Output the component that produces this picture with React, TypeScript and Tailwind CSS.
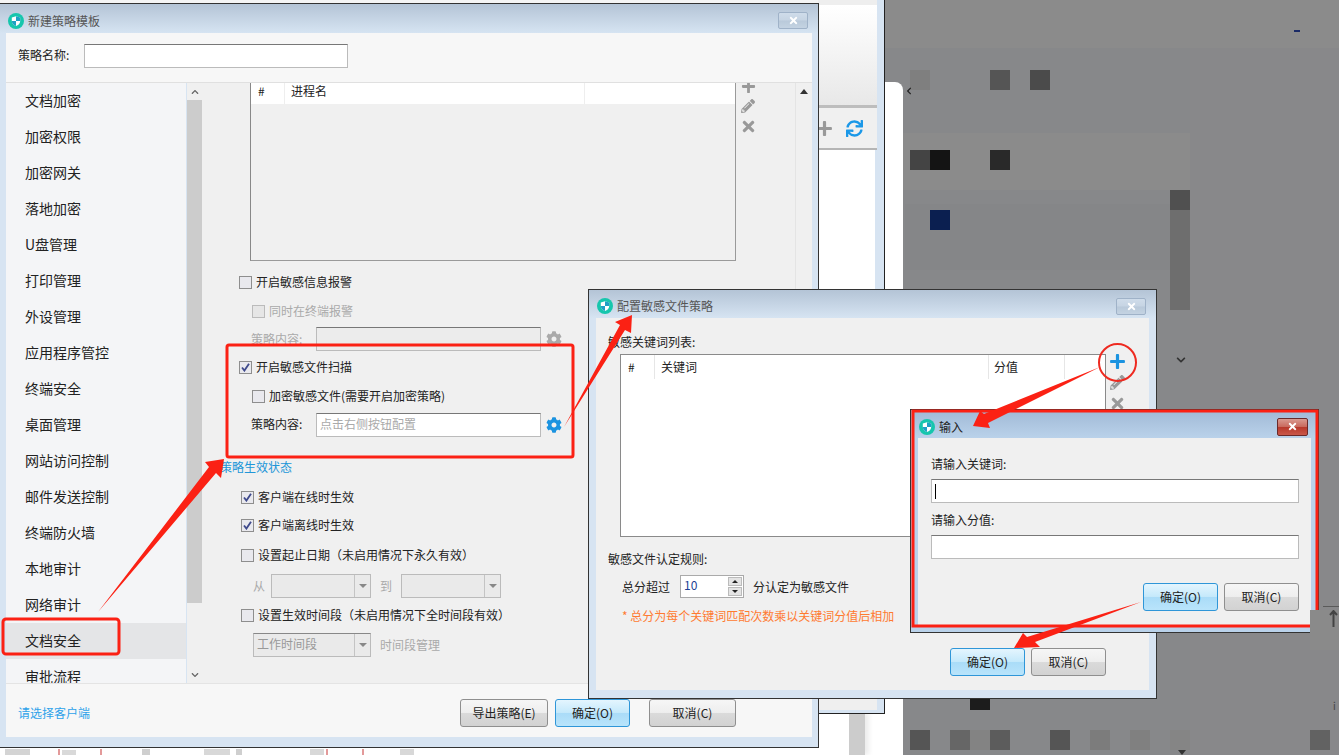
import type { ReactNode } from "react";
import { FaCog, FaPencilAlt, FaPlus, FaSync, FaTimes, FaChevronDown, FaChevronUp, FaChevronLeft } from "react-icons/fa";

const MENU = [
  "文档加密", "加密权限", "加密网关", "落地加密", "U盘管理", "打印管理", "外设管理", "应用程序管控", "终端安全",
  "桌面管理", "网站访问控制", "邮件发送控制", "终端防火墙", "本地审计", "网络审计", "文档安全", "审批流程",
];

// blurred-out content of the page behind the dialogs
const MOSAIC = [
  { x: 884, y: 48, w: 455, h: 707, c: "#87888a" },
  { x: 903, y: 133, w: 287, h: 57, c: "#8b8b8b" },
  { x: 905, y: 204, w: 265, h: 66, c: "#858688" },
  { x: 1190, y: 48, w: 149, h: 707, c: "#88888a" },
  { x: 1170, y: 190, w: 20, h: 20, c: "#505050" },
  { x: 1170, y: 210, w: 20, h: 100, c: "#6e6e6e" },
  { x: 910, y: 70, w: 20, h: 20, c: "#7f7f7f" },
  { x: 990, y: 70, w: 20, h: 20, c: "#555555" },
  { x: 1030, y: 70, w: 20, h: 20, c: "#4b4b4b" },
  { x: 910, y: 150, w: 20, h: 20, c: "#444444" },
  { x: 930, y: 150, w: 20, h: 20, c: "#141414" },
  { x: 990, y: 150, w: 20, h: 20, c: "#292929" },
  { x: 930, y: 210, w: 20, h: 20, c: "#0b1f50" },
  { x: 970, y: 690, w: 20, h: 20, c: "#1c1c1c" },
  { x: 910, y: 730, w: 20, h: 20, c: "#555555" },
  { x: 950, y: 730, w: 20, h: 20, c: "#666666" },
  { x: 970, y: 730, w: 20, h: 20, c: "#838383" },
  { x: 990, y: 730, w: 20, h: 20, c: "#5c5c5c" },
  { x: 1050, y: 730, w: 20, h: 20, c: "#555555" },
  { x: 1090, y: 730, w: 20, h: 20, c: "#7c7c7c" },
  { x: 1130, y: 730, w: 20, h: 20, c: "#808080" },
  { x: 1170, y: 730, w: 20, h: 20, c: "#858585" },
  { x: 1310, y: 730, w: 20, h: 20, c: "#626262" },
  { x: 1294, y: 30, w: 6, h: 2, c: "#1a2a66" },
  // strip of thumbnails under the main dialog
  { x: 0, y: 748, w: 903, h: 7, c: "#ffffff" },
  { x: 5, y: 749, w: 25, h: 6, c: "#d4d4d4" },
  { x: 58, y: 749, w: 2, h: 6, c: "#e39a9a" },
  { x: 62, y: 750, w: 14, h: 5, c: "#d9d9d9" },
  { x: 100, y: 749, w: 2, h: 6, c: "#e39a9a" },
  { x: 142, y: 749, w: 8, h: 6, c: "#cfcfcf" },
  { x: 204, y: 749, w: 26, h: 6, c: "#d8d8d8" },
  { x: 236, y: 749, w: 6, h: 6, c: "#cfcfcf" },
  { x: 310, y: 749, w: 14, h: 6, c: "#d8d8d8" },
  { x: 326, y: 749, w: 2, h: 6, c: "#e39a9a" },
  { x: 362, y: 749, w: 2, h: 6, c: "#e39a9a" },
  { x: 400, y: 749, w: 14, h: 6, c: "#d8d8d8" },
];

function Logo() {
  return (
    <svg width="16" height="16" viewBox="0 0 16 16" className="shrink-0">
      <circle cx="8" cy="8" r="8" fill="#16c6ad" />
      <path d="M8 3.2 L12.2 4.6 V8 C12.2 10.6 10.2 12.2 8 13 C5.8 12.2 3.8 10.6 3.8 8 V4.6 Z" fill="#ffffff" />
      <path d="M8 3.2 L12.2 4.6 V8 H8 Z M8 8 V13 C5.8 12.2 3.8 10.6 3.8 8 Z" fill="#1f9fc4" />
    </svg>
  );
}

function CloseBtn({ active }: { active?: boolean }) {
  return (
    <div
      className={
        active
          ? "flex h-[18px] w-[31px] items-center justify-center rounded-[2px] border border-[#6b2a2a] bg-[linear-gradient(#d99a90_0%,#c96a5e_48%,#b8392c_52%,#c9584a_100%)] text-white"
          : "flex h-[17px] w-[30px] items-center justify-center rounded-[2px] border border-[#9fb2c8] bg-[linear-gradient(#cfdcea_0%,#c6d4e3_48%,#b9c9da_52%,#c4d3e2_100%)] text-white"
      }
    >
      <FaTimes size={11} />
    </div>
  );
}

function TitleBar({ title, active, dark, short }: { title: string; active?: boolean; dark?: boolean; short?: boolean }) {
  return (
    <div
      className={`flex ${short ? "h-[28px]" : "h-[29px]"} shrink-0 items-center justify-between pl-[8px] pr-[10px] ${
        dark
          ? "bg-[linear-gradient(#a0b9d6,#bad2ea)] pt-[5px] text-[#222]"
          : "bg-[linear-gradient(#b4c4d6,#d6e4f2)] pt-[4px] text-[#555]"
      }`}
    >
      <div className="flex items-center gap-[4px] text-[12px] leading-[16px]">
        <Logo />
        <span>{title}</span>
      </div>
      <CloseBtn active={active} />
    </div>
  );
}

function Btn({ children, primary, w = "w-[75px]" }: { children: ReactNode; primary?: boolean; w?: string }) {
  return (
    <div
      className={`flex h-[28px] ${w} items-center justify-center rounded-[3px] border text-[12px] leading-[16px] text-[#222] ${
        primary
          ? "border-[#2f96d8] bg-[linear-gradient(#e4f5fe_0%,#c5e9fb_48%,#aadcf8_52%,#b9e4fb_100%)]"
          : "border-[#8f8f8f] bg-[linear-gradient(#f6f6f6_0%,#eeeeee_48%,#dadada_52%,#d2d2d2_100%)]"
      }`}
    >
      {children}
    </div>
  );
}

function Check({ checked, disabled }: { checked?: boolean; disabled?: boolean }) {
  return (
    <div
      className={`flex h-[13px] w-[13px] shrink-0 items-center justify-center border ${
        disabled ? "border-[#bbbbbb] bg-[#e6e6e6]" : "border-[#8e8e8e] bg-[#e9e9ee]"
      }`}
    >
      {checked && (
        <svg width="9" height="9" viewBox="0 0 9 9">
          <path d="M1 4.5 L3.4 7.6 L8 0.8" fill="none" stroke="#3f4a8c" strokeWidth="1.8" />
        </svg>
      )}
    </div>
  );
}

function CheckRow({ label, className, checked, disabled }: { label: string; className: string; checked?: boolean; disabled?: boolean }) {
  return (
    <div className={`flex h-[24px] items-center gap-[4px] text-[12px] ${disabled ? "text-[#aaaaaa]" : "text-[#222]"} ${className}`}>
      <Check checked={checked} disabled={disabled} />
      <span>{label}</span>
    </div>
  );
}

function Combo({ w, text, plain }: { w: string; text?: string; plain?: boolean }) {
  return (
    <div className={`flex h-[24px] ${w} border ${plain ? "border-[#bbbbbb]" : "border-[#bbbbbb] border-t-[#888888]"} bg-[#eaeaea]`}>
      <div className="flex-1 pl-[3px] text-[12px] leading-[20px] text-[#999999]">{text}</div>
      <div className="flex w-[16px] items-center justify-center border-l border-[#c4c4c4]">
        <div className="h-0 w-0 border-x-[4px] border-t-[4px] border-x-transparent border-t-[#888888]" />
      </div>
    </div>
  );
}

function TextBox({ w, className = "", children, disabled }: { w: string; className?: string; children?: ReactNode; disabled?: boolean }) {
  return (
    <div
      className={`h-[24px] ${w} shrink-0 border border-[#bbbbbb] border-t-[#777777] ${
        disabled ? "bg-[#ececec]" : "bg-white"
      } ${className}`}
    >
      {children}
    </div>
  );
}

function MainDialog() {
  return (
    <div className="absolute left-[-1px] top-[3px] flex h-[745px] w-[820px] flex-col border border-[#333333] bg-[#d7e4f2]">
      <TitleBar title="新建策略模板" />
      <div className="mx-[6px] flex h-[704px] flex-col">
        <div className="flex h-[50px] shrink-0 gap-[12px] border-b border-[#e0e0e0] bg-[#f7f7f7] pl-[12px] pt-[11px] text-[12px] leading-[22px] text-[#222]">
          <span className="w-[54px]">策略名称:</span>
          <TextBox w="w-[264px]" />
        </div>

        <div className="flex h-[600px] shrink-0">
          <div className="h-full w-[180px] shrink-0 overflow-hidden bg-[#f4f5f7]">
            {MENU.map((m) => (
              <div
                key={m}
                className={`h-[36px] pl-[19px] text-[14px] leading-[34px] text-[#222] ${m === "文档安全" ? "bg-[#e4e5e7]" : ""}`}
              >
                {m}
              </div>
            ))}
          </div>
          <div className="ml-[1px] flex h-full w-[15px] shrink-0 flex-col bg-[#f0f0f0] text-[#666666]">
            <div className="flex h-[17px] items-center justify-center">
              <FaChevronUp size={8} />
            </div>
            <div className="h-[503px] bg-[#cccccc]" />
            <div className="flex flex-1 items-end justify-center pb-[4px]">
              <FaChevronDown size={8} />
            </div>
          </div>

          <div className="flex min-w-0 flex-1 overflow-hidden bg-[#f0f0f0]">
            <div className="min-w-0 flex-1 pl-[37px]">
              <div className="ml-[11px] flex">
                <div className="h-[178px] w-[486px] shrink-0 border border-t-0 border-[#9a9a9a] border-l-[#888888]">
                  <div className="flex h-[21px] bg-white text-[12px] leading-[16px] text-[#222]">
                    <div className="w-[34px] border-r border-[#eeeeee] pl-[7px]">#</div>
                    <div className="w-[300px] border-r border-[#eeeeee] pl-[6px]">进程名</div>
                  </div>
                </div>
                <div className="ml-[4px] mt-[-4px] flex w-[16px] flex-col items-center gap-[5px] text-[#999999]">
                  <FaPlus size={15} />
                  <FaPencilAlt size={14} />
                  <FaTimes size={17} />
                </div>
              </div>

              <CheckRow className="mt-[9px]" label="开启敏感信息报警" />
              <CheckRow className="ml-[13px] mt-[5px]" label="同时在终端报警" disabled />
              <div className="ml-[12px] mt-[4px] flex h-[24px] items-center text-[12px] text-[#aaaaaa]">
                <span className="w-[65px] shrink-0">策略内容:</span>
                <TextBox w="w-[225px]" disabled />
                <FaCog size={16} className="ml-[5px] text-[#aaaaaa]" />
              </div>
              <CheckRow className="mt-[4px]" label="开启敏感文件扫描" checked />
              <CheckRow className="ml-[13px] mt-[5px]" label="加密敏感文件(需要开启加密策略)" />
              <div className="ml-[12px] mt-[5px] flex h-[24px] items-center text-[12px] text-[#222]">
                <span className="mt-[-2px] w-[65px] shrink-0">策略内容:</span>
                <TextBox w="w-[225px]" className="pl-[3px] leading-[20px] text-[#aaaaaa]">
                  点击右侧按钮配置
                </TextBox>
                <FaCog size={16} className="ml-[5px] text-[#1b93e0]" />
              </div>
              <div className="ml-[-19px] mt-[18px] h-[24px] text-[12px] leading-[24px] text-[#2196d8]">策略生效状态</div>
              <CheckRow className="ml-[2px] mt-[6px]" label="客户端在线时生效" checked />
              <CheckRow className="ml-[2px] mt-[4px]" label="客户端离线时生效" checked />
              <CheckRow className="ml-[2px] mt-[6px]" label="设置起止日期（未启用情况下永久有效）" />
              <div className="ml-[14px] mt-[7px] flex items-center text-[12px] text-[#aaaaaa]">
                <span className="w-[18px]">从</span>
                <Combo w="w-[100px]" plain />
                <span className="w-[30px] pl-[9px]">到</span>
                <Combo w="w-[100px]" plain />
              </div>
              <CheckRow className="ml-[2px] mt-[5px]" label="设置生效时间段（未启用情况下全时间段有效）" />
              <div className="ml-[14px] mt-[6px] flex items-center gap-[9px] text-[12px] text-[#aaaaaa]">
                <Combo w="w-[118px]" text="工作时间段" />
                <span>时间段管理</span>
              </div>
            </div>
            <div className="w-[17px] shrink-0 border-l border-[#e4e4e4] pt-[6px]">
              <div className="mx-auto h-0 w-0 border-x-[4px] border-b-[5px] border-x-transparent border-b-[#333333]" />
            </div>
          </div>
        </div>

        <div className="flex h-[54px] shrink-0 items-center justify-between border-t border-[#e4e4e4] bg-[#f7f7f7] pl-[12px] pr-[76px] pt-[5px]">
          <span className="text-[12px] text-[#2ea2ea]">请选择客户端</span>
          <div className="flex gap-[7px]">
            <Btn w="w-[88px]">导出策略(E)</Btn>
            <Btn primary w="w-[75px]">确定(O)</Btn>
            <div className="ml-[12px]">
              <Btn w="w-[87px]">取消(C)</Btn>
            </div>
          </div>
        </div>
      </div>
    </div>
  );
}

function RulesDialog() {
  return (
    <div className="absolute left-[588px] top-[289px] flex h-[410px] w-[569px] flex-col border border-[#333333] bg-[#d7e4f2]">
      <TitleBar title="配置敏感文件策略" short />
      <div className="mx-[7px] h-[372px] bg-[#f0f0f0] pl-[12px] pt-[14px] text-[12px] text-[#222]">
        <div className="h-[20px] leading-[20px]">敏感关键词列表:</div>
        <div className="ml-[12px] mt-[2px] flex">
          <div className="h-[183px] w-[486px] shrink-0 border border-[#8a8a8a] bg-white">
            <div className="flex h-[24px] leading-[24px]">
              <div className="w-[34px] border-r border-[#e6e6e6] pl-[7px]">#</div>
              <div className="w-[334px] border-r border-[#e6e6e6] pl-[6px]">关键词</div>
              <div className="w-[76px] border-r border-[#e6e6e6] pl-[5px]">分值</div>
            </div>
          </div>
          <div className="ml-[3px] mt-[-1px] flex flex-col items-center gap-[5px]">
            <FaPlus size={17} className="text-[#1b93e0]" />
            <FaPencilAlt size={15} className="text-[#999999]" />
            <FaTimes size={17} className="text-[#999999]" />
          </div>
        </div>
        <div className="mt-[12px] h-[20px] leading-[20px]">敏感文件认定规则:</div>
        <div className="ml-[14px] mt-[6px] flex h-[23px] items-center">
          <span className="w-[58px]">总分超过</span>
          <div className="flex h-[23px] w-[64px] border border-[#aaaaaa] bg-white">
            <div className="flex-1 pl-[3px] leading-[18px] text-[#1c3f94]">10</div>
            <div className="flex w-[15px] flex-col gap-[1px] py-[1px] pr-[1px]">
              <div className="flex flex-1 items-center justify-center border border-[#bbbbbb] bg-[#e4e4e4]">
                <div className="h-0 w-0 border-x-[3px] border-b-[3px] border-x-transparent border-b-[#222222]" />
              </div>
              <div className="flex flex-1 items-center justify-center border border-[#bbbbbb] bg-[#e4e4e4]">
                <div className="h-0 w-0 border-x-[3px] border-t-[3px] border-x-transparent border-t-[#222222]" />
              </div>
            </div>
          </div>
          <span className="ml-[9px]">分认定为敏感文件</span>
        </div>
        <div className="ml-[14px] mt-[9px] h-[18px] leading-[18px] text-[#ff7a30]">* 总分为每个关键词匹配次数乘以关键词分值后相加</div>
        <div className="mt-[23px] flex justify-end gap-[6px] pr-[43px]">
          <Btn primary>确定(O)</Btn>
          <Btn>取消(C)</Btn>
        </div>
      </div>
    </div>
  );
}

function InputDialog() {
  return (
    <div className="absolute left-[910px] top-[409px] flex h-[224px] w-[409px] flex-col border border-[#333333] bg-[#bad2ea]">
      <TitleBar title="输入" active dark short />
      <div className="mx-[7px] h-[187px] bg-[#f0f0f0] pl-[13px] pr-[12px] pt-[16px] text-[12px] text-[#222]">
        <div className="h-[20px] leading-[20px]">请输入关键词:</div>
        <TextBox w="w-full" className="mt-[5px] pl-[3px] pt-[4px]">
          <div className="h-[15px] w-[1px] bg-black" />
        </TextBox>
        <div className="mt-[7px] h-[20px] leading-[20px]">请输入分值:</div>
        <TextBox w="w-full" className="mt-[5px]" />
        <div className="mt-[24px] flex justify-end gap-[6px]">
          <Btn primary>确定(O)</Btn>
          <Btn>取消(C)</Btn>
        </div>
      </div>
    </div>
  );
}

function BehindWindow() {
  return (
    <>
      {/* white page behind everything, right of the main dialog */}
      <div className="absolute bottom-0 left-[818px] top-[82px] flex w-[85px] flex-col justify-end rounded-tr-[8px] bg-white pl-[31px]">
        <div className="h-[42px] w-[16px] bg-[#cccccc] shadow-[4px_0_5px_rgba(0,0,0,0.08)]" />
      </div>
      <div className="absolute left-0 top-0 flex h-[714px] w-[885px] flex-col border-b border-r border-[#222222] bg-[#d7e4f2] pb-[3px] pl-[818px] pr-[7px]">
        <div className="h-[5px] bg-[#eeeeee]" />
        <div className="h-[100px] bg-[linear-gradient(#ffffff,#e8e8e8)]" />
        <div className="h-[3px] bg-[#bdbdbd]" />
        <div className="flex h-[42px] items-center gap-[13px] border-b-2 border-[#b5b5b5] bg-[#f0f0f0]">
          <FaPlus size={17} className="ml-[-2px] text-[#999999]" />
          <FaSync size={17} className="text-[#1b98e8]" />
        </div>
        <div className="mr-[2px] flex-1 bg-white" />
        <div className="h-[12px] bg-[#efefef]" />
      </div>
      <div className="absolute left-0 top-0 h-[3px] w-[818px] bg-[#f5f5f5]" />
    </>
  );
}

function Annotations() {
  return (
    <svg width="1339" height="755" viewBox="0 0 1339 755" className="pointer-events-none absolute left-0 top-0">
      <g fill="none" stroke="#fb2114" strokeWidth="3">
        <rect x="227" y="345" width="346" height="112" rx="2" />
        <rect x="3" y="619" width="116" height="35" rx="3" />
        <rect x="913" y="411" width="404" height="215" />
      </g>
      <circle cx="1117.5" cy="362.5" r="18.5" fill="none" stroke="#ee2a20" strokeWidth="2" />
      <g fill="#fb2114">
        <polygon points="98,612 209,467 205,462 224,459 221,478 216,473" />
        <polygon points="564,427 620,325 615,322 632,315 631,333 625,330" />
        <polygon points="1100,367 984,414 980,411 973,426 990,428 988,423" />
        <polygon points="1141,602 1027,637 1023,633 1014,648 1040,647 1035,642" />
      </g>
    </svg>
  );
}

export default function App() {
  return (
    <div className="relative h-[755px] w-[1339px] overflow-hidden bg-[#8b8b8b] font-['Noto_Sans_CJK_SC','Liberation_Sans',sans-serif]">
      {MOSAIC.map((b) => (
        <div
          key={`${b.x}-${b.y}-${b.w}`}
          className="absolute"
          style={{ left: b.x, top: b.y, width: b.w, height: b.h, backgroundColor: b.c }}
        />
      ))}
      <FaChevronLeft size={8} className="absolute left-[905px] top-[87px] text-[#222222]" />
      <FaChevronDown size={10} className="absolute left-[1176px] top-[355px] text-[#333333]" />
      <div className="absolute left-[1178px] top-[750px] h-0 w-0 border-x-[4px] border-t-[5px] border-x-transparent border-t-[#333333]" />

      <BehindWindow />
      <MainDialog />
      <RulesDialog />
      <InputDialog />
      <Annotations />

      {/* page scrap that was pasted over the corner of the input dialog */}
      <div className="absolute left-[1310px] top-[610px] flex h-[40px] w-[29px] flex-col items-end bg-[#8a8a8a] pr-[1px] text-[#444444]">
        <svg width="9" height="18" viewBox="0 0 9 18">
          <path d="M4.5 1 V17 M1 5 L4.5 1 L8 5" fill="none" stroke="#444444" strokeWidth="2" />
        </svg>
      </div>
      <div className="absolute left-[1323px] top-[606px] h-[1px] w-[16px] bg-[#5a5a5a]" />
      <div className="absolute left-[1333px] top-[700px] text-[10px] leading-[12px] text-[#444444]">i</div>
    </div>
  );
}
